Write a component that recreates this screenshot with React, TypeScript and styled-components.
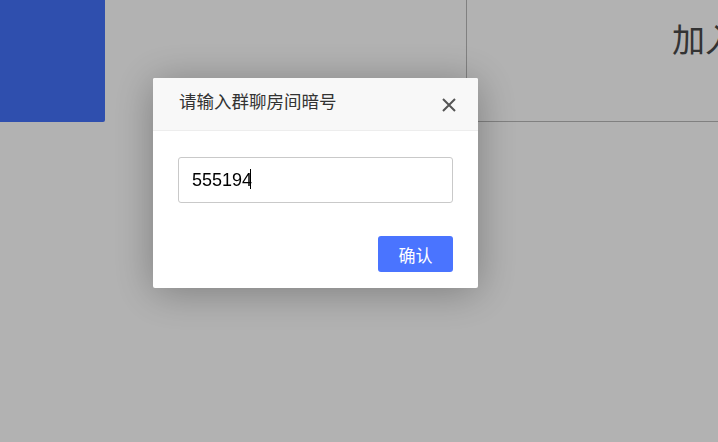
import React from "react";
import styled, { createGlobalStyle } from "styled-components";

const GlobalStyle = createGlobalStyle`
  html, body {
    margin: 0;
    padding: 0;
    background: #fff;
    overflow: hidden;
  }
  body {
    font-family: "Noto Sans CJK SC", "Liberation Sans", sans-serif;
  }
`;

const Page = styled.div`
  width: 718px;
  height: 442px;
  display: flex;
  align-items: flex-start;
  overflow: hidden;
`;

const BrandBlock = styled.div`
  width: 105px;
  height: 122px;
  flex: none;
  background: #4472f9;
  border-bottom-right-radius: 2px;
`;

const JoinPanel = styled.div`
  margin-left: 361px;
  width: 400px;
  height: 122px;
  flex: none;
  border-left: 1px solid #b8b8b8;
  border-bottom: 1px solid #b8b8b8;
  box-sizing: border-box;
  padding: 16px 0 0 205px;
`;

const JoinTitle = styled.div`
  font-size: 33px;
  line-height: 44px;
  color: #4a4a4a;
  white-space: nowrap;
`;

const Overlay = styled.div`
  position: fixed;
  inset: 0;
  background: rgba(0, 0, 0, 0.3);
`;

const Dialog = styled.div`
  position: absolute;
  left: 153px;
  top: 78px;
  width: 325px;
  background: #fff;
  border-radius: 2px;
  overflow: hidden;
  box-shadow: 0 4px 40px rgba(0, 0, 0, 0.3);
`;

const DialogHeader = styled.div`
  height: 53px;
  box-sizing: border-box;
  display: flex;
  align-items: center;
  justify-content: space-between;
  padding: 0 20px 0 26px;
  background: #f8f8f8;
  border-bottom: 1px solid #ededed;
`;

const DialogTitle = styled.div`
  font-size: 17.5px;
  color: #333;
  margin-top: -7px;
`;

const CloseButton = styled.button`
  width: 18px;
  height: 18px;
  padding: 0;
  border: none;
  background: none;
  display: flex;
  align-items: center;
  justify-content: center;
  cursor: pointer;
  margin-top: 2px;
`;

const DialogBody = styled.div`
  padding: 26px 25px 16px;
  display: flex;
  flex-direction: column;
`;

const InputWrap = styled.div`
  position: relative;
  display: flex;
`;

const CodeInput = styled.input`
  flex: 1;
  height: 46px;
  box-sizing: border-box;
  border: 1px solid #c9c9c9;
  border-radius: 3px;
  padding: 0 13px;
  font-family: "Liberation Sans", Arial, sans-serif;
  font-size: 18px;
  color: #000;
  outline: none;
  caret-color: transparent;
`;

const Caret = styled.span`
  position: absolute;
  top: 12px;
  width: 1px;
  height: 20px;
  background: #000;
  pointer-events: none;
`;

const Footer = styled.div`
  display: flex;
  justify-content: flex-end;
  margin-top: 33px;
`;

const ConfirmButton = styled.button`
  width: 75px;
  height: 36px;
  border: none;
  border-radius: 3px;
  background: #4a74ff;
  color: #fff;
  font-family: "Noto Sans CJK SC", sans-serif;
  font-size: 17px;
  cursor: pointer;
`;

export default function App() {
  const code = "555194";
  return (
    <>
      <GlobalStyle />
      <Page>
        <BrandBlock />
        <JoinPanel>
          <JoinTitle>加入群聊</JoinTitle>
        </JoinPanel>
      </Page>
      <Overlay>
        <Dialog>
          <DialogHeader>
            <DialogTitle>请输入群聊房间暗号</DialogTitle>
            <CloseButton aria-label="close">
              <svg width="16" height="16" viewBox="0 0 16 16">
                <path
                  d="M2 2 L14 14 M14 2 L2 14"
                  stroke="#555"
                  strokeWidth="2"
                  fill="none"
                />
              </svg>
            </CloseButton>
          </DialogHeader>
          <DialogBody>
            <InputWrap>
              <CodeInput defaultValue={code} />
              <Caret style={{ left: 13 + code.length * 10 - 1 }} />
            </InputWrap>
            <Footer>
              <ConfirmButton>确认</ConfirmButton>
            </Footer>
          </DialogBody>
        </Dialog>
      </Overlay>
    </>
  );
}
